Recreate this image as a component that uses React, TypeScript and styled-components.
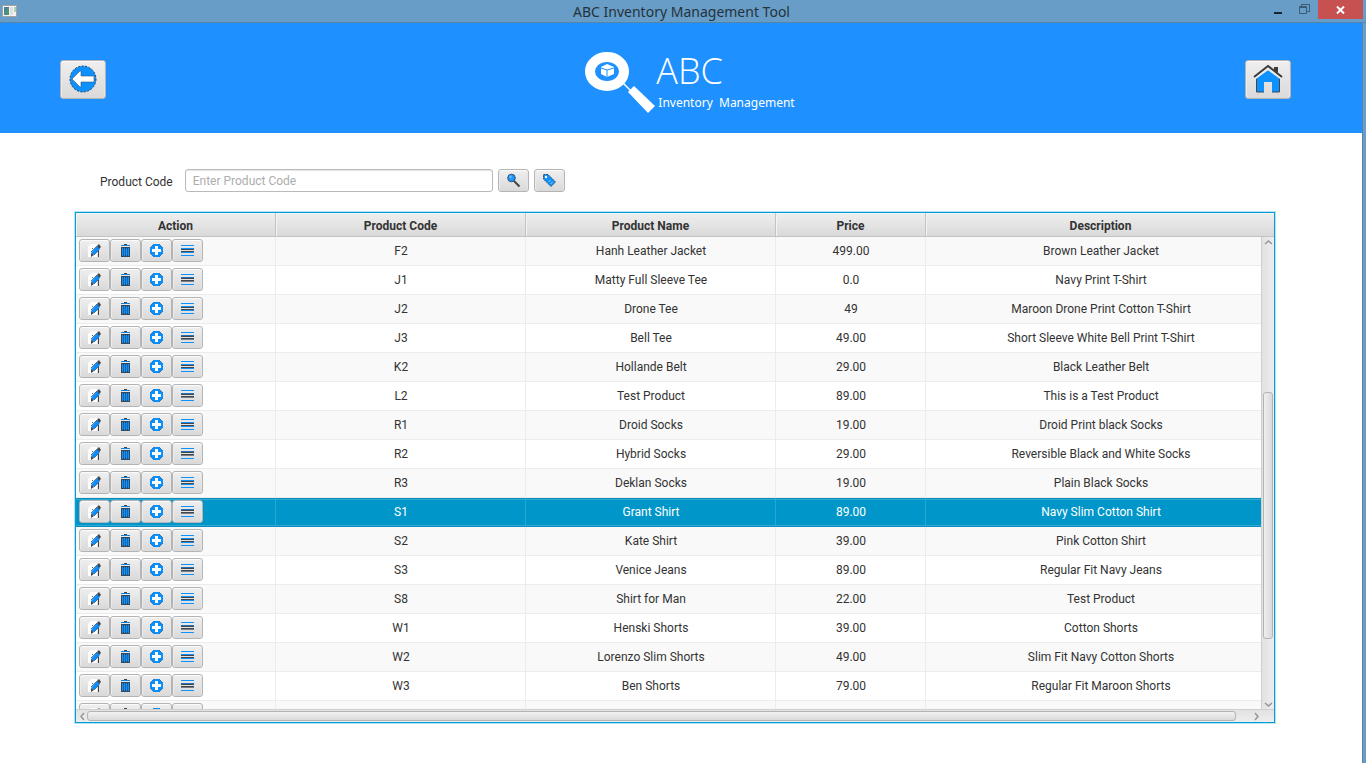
import React from "react";
import styled, { createGlobalStyle, css } from "styled-components";

const GlobalStyle = createGlobalStyle`
  *, *::before, *::after { box-sizing: border-box; }
  body { margin: 0; background: #fff; }
  button, input { font: inherit; margin: 0; }
`;

const Frame = styled.div`
  display: flex;
  flex-direction: column;
  height: 100vh;
  font: 12px/16px Roboto, "Liberation Sans", sans-serif;
  color: #333;
`;

const TitleBar = styled.header`
  display: grid;
  grid-template-columns: 1fr auto 1fr;
  height: 23px;
  flex: none;
  padding-right: 3px;
  background: #679dc6;
  border-bottom: 1px solid #5585a9;
`;

const AppMark = styled.svg`
  margin: 5px 0 0 2px;
`;

const WindowTitle = styled.h1`
  margin: 0;
  font: 400 14px/23px "Noto Sans", "Open Sans", sans-serif;
  color: #26323b;
`;

const WindowControls = styled.div`
  display: flex;
  justify-content: flex-end;
  align-items: flex-start;
`;

const ControlButton = styled.button<{ $close?: boolean }>`
  display: flex;
  align-items: center;
  justify-content: center;
  width: ${(p) => (p.$close ? "45px" : "27px")};
  height: 19px;
  padding: 0;
  border: 0;
  background: ${(p) => (p.$close ? "#c75050" : "transparent")};
`;

const ClientFrame = styled.div`
  display: flex;
  flex-direction: column;
  flex: 1;
  min-height: 0;
  padding-right: 3px;
  background: #679dc6;
`;

const Client = styled.main`
  display: flex;
  flex-direction: column;
  flex: 1;
  min-height: 0;
  border-right: 1px solid #5585a9;
  background: #fff;
`;

const Banner = styled.div`
  display: grid;
  grid-template-columns: 1fr auto 1fr;
  flex: none;
  height: 110px;
  padding: 0 71px 0 60px;
  background: #1e90ff;
`;

const raised = css`
  display: inline-flex;
  align-items: center;
  justify-content: center;
  flex: none;
  padding: 0;
  border: 1px solid #b4b4b4;
  border-radius: 3px;
  background: linear-gradient(#efefef, #d9d9d9);
  box-shadow: inset 0 1px 0 #fbfbfb, inset 1px 0 0 #ececec, inset -1px 0 0 #e6e6e6;
  svg { overflow: visible; }
`;

const BannerButton = styled.button<{ $end?: boolean }>`
  ${raised}
  width: 46px;
  height: 39px;
  margin-top: 37px;
  justify-self: ${(p) => (p.$end ? "end" : "start")};
`;

const IconButton = styled.button`
  ${raised}
  width: 31px;
  height: 23px;
`;

const Brand = styled.div`
  display: flex;
  align-items: flex-start;
  padding: 29px 0 0 29px;
`;

const BrandText = styled.div`
  display: flex;
  flex-direction: column;
  color: #fff;
  font-family: "Noto Sans", "Open Sans", sans-serif;
`;

const BrandName = styled.span`
  font-family: "Open Sans", "Noto Sans", sans-serif;
  font-size: 36px;
  font-weight: 300;
  line-height: 38px;
`;

const BrandTag = styled.span`
  padding-left: 2px;
  font-size: 12px;
  line-height: 26px;
  white-space: pre;
`;

const SearchForm = styled.form`
  display: flex;
  align-items: center;
  gap: 5px;
  flex: none;
  padding: 36px 100px 20px;
`;

const SearchLabel = styled.label`
  margin-right: 7px;
  padding-top: 2px;
`;

const SearchInput = styled.input`
  width: 308px;
  height: 23px;
  padding: 0 7px;
  border: 1px solid #bababa;
  border-radius: 3px;
  background: #fff;
  box-shadow: inset 0 1px 1px #e6e6e6;
  color: #333;
  outline: 0;
  &::placeholder { color: #adadad; opacity: 1; }
`;

const TablePanel = styled.section`
  display: grid;
  grid-template-columns: minmax(0, 1fr) 13px;
  grid-template-rows: 24px minmax(0, 1fr) 13px;
  flex: 1;
  min-height: 0;
  margin: 0 87px 40px 75px;
  border: 1px solid #039ed3;
  box-shadow: 0 0 0 1px #b6e2f3;
`;

const TableClip = styled.div`
  grid-column: 1 / 3;
  grid-row: 1 / 3;
  overflow: hidden;
`;

const ProductTable = styled.table`
  width: 100%;
  min-width: 1200px;
  table-layout: fixed;
  border-collapse: separate;
  border-spacing: 0;
  text-align: center;
`;

const Col = styled.col<{ $width?: number }>`
  width: ${(p) => (p.$width ? `${p.$width}px` : "auto")};
`;

const HeadCell = styled.th`
  height: 24px;
  padding: 2px 0 0;
  font-weight: 700;
  border-right: 1px solid #c3c3c3;
  border-bottom: 1px solid #c3c3c3;
  background: linear-gradient(#efefef, #d9d9d9);
  box-shadow: inset 1px 1px 0 #f4f4f4;
`;

const Cell = styled.td`
  height: 29px;
  padding: 0 0 0 1px;
  border-right: 1px solid #ececec;
  border-bottom: 1px solid #ececec;
`;

const ActionCell = styled(Cell)`
  padding: 2px 0 0 3px;
  vertical-align: top;
`;

const Row = styled.tr<{ $selected: boolean }>`
  background: #fff;
  &:nth-child(odd) { background: #f9f9f9; }
  ${(p) =>
    p.$selected &&
    css`
      &&, &&:nth-child(odd) { background: #0096c9; color: #fff; }
      ${Cell} {
        border-right-color: #28a7d3;
        border-bottom-color: #0b8cba;
        box-shadow: inset 0 1px 0 #0b8cba, inset 0 2px 0 #30aad6, inset 0 -1px 0 #30aad6;
      }
    `}
`;

const Actions = styled.div`
  display: flex;
`;

const Scrollbar = styled.div<{ $vertical?: boolean }>`
  display: grid;
  ${(p) =>
    p.$vertical
      ? css`
          grid-column: 2;
          grid-row: 2;
          grid-template-rows: 9px 146fr 247fr 61fr 9px;
          border-left: 1px solid #cfcfcf;
          background: linear-gradient(90deg, #e2e2e2, #ededed);
        `
      : css`
          grid-column: 1 / 3;
          grid-row: 3;
          grid-template-columns: 11px 1149fr 14fr 24px;
          border-top: 1px solid #cfcfcf;
          background: linear-gradient(#e2e2e2, #ededed);
        `}
`;

const Thumb = styled.div<{ $vertical?: boolean }>`
  border: 1px solid #b4b4b4;
  border-radius: 3px;
  ${(p) =>
    p.$vertical
      ? css`
          grid-row: 3;
          margin: 0 1px;
          background: linear-gradient(90deg, #efefef, #d9d9d9);
        `
      : css`
          margin: 1px 0;
          background: linear-gradient(#f2f2f2, #dadada);
        `}
`;

const ArrowButton = styled.button<{ $last?: boolean; $corner?: boolean }>`
  display: flex;
  align-items: center;
  justify-content: center;
  padding: ${(p) => (p.$corner ? "0 12px 0 2px" : "0")};
  border: 0;
  background: transparent;
  ${(p) => p.$last && "grid-row: 5;"}
`;

const PencilIcon = () => (
  <svg width="15" height="15" viewBox="0 0 15 15" aria-hidden="true">
    <path d="M1 4 4 1H10V14H1z" fill="#fff" />
    <path d="M4 10 10 3 13 6 7 12z" fill="#0d8dfc" />
    <path d="M5 8 10 3M7 12 12 7" stroke="#2a5f92" strokeWidth=".8" fill="none" />
    <path d="M10 3 12 1 14 4 12 6zM4 10 7 12 4 14z" fill="#40464c" />
    <path d="M11 8h1v6h-1z" fill="#444" />
    <path d="M5 5h1v1H5zM4 8h1v1H4z" fill="#666" />
  </svg>
);

const TrashIcon = () => (
  <svg width="15" height="15" viewBox="0 0 15 15" shapeRendering="crispEdges" aria-hidden="true">
    <path d="M6 1h3v1H6z" fill="#444" />
    <path d="M3 2h9v1H3z" fill="#1183df" />
    <path d="M3 4h9v10H3z" fill="#33475a" />
    <path d="M4 5h1v8H4zM6 5h1v8H6zM8 5h1v8H8zM10 5h1v8h-1z" fill="#0c91ff" />
    <path d="M5 6h1v6H5zM7 6h1v6H7zM9 6h1v6H9z" fill="#1565a8" />
  </svg>
);

const PlusIcon = () => (
  <svg width="15" height="15" viewBox="0 0 15 15" aria-hidden="true">
    <path d="M5 1h5l4 4v5l-4 4H5l-4-4V5z" fill="#0790ff" />
    <path d="M5 1 1 5M10 1 14 5M1 10 5 14M14 10 10 14" stroke="#2b669b" strokeWidth=".8" />
    <path d="M6 3h3v3h3v3H9v3H6V9H3V6h3z" fill="#fff" />
  </svg>
);

const ListIcon = ({ dark }: { dark: boolean }) => (
  <svg width="15" height="15" viewBox="0 0 15 15" shapeRendering="crispEdges" aria-hidden="true">
    <path d="M1 2h13v1H1zM1 12h13v1H1z" fill="#0d92ff" />
    <path d="M1 5h13v1H1z" fill={dark ? "#2470b4" : "#0d92ff"} />
    <path d="M1 6h13v1H1zM1 8h13v1H1z" fill="#42474d" />
    <path d="M1 9h13v1H1z" fill={dark ? "#777d84" : "#0d92ff"} />
  </svg>
);

const MagnifierIcon = () => (
  <svg width="15" height="15" viewBox="0 0 15 15" aria-hidden="true">
    <path d="M8 8 13.500 13.500" stroke="#444" strokeWidth="2" />
    <circle cx="5.500" cy="5" r="3.800" fill="#1c94ff" stroke="#33536e" />
    <circle cx="4.500" cy="4" r="1.400" fill="#62b6ff" />
  </svg>
);

const TagIcon = () => (
  <svg width="15" height="15" viewBox="0 0 15 15" aria-hidden="true">
    <path d="M1.500 1.500H6L13.500 9 9 13.500 1.500 6z" fill="#0c91ff" stroke="#344e65" strokeDasharray="2 .6" />
    <circle cx="4" cy="4" r="1.200" fill="#fff" />
    <path d="M6.500 9 9 6.500M8.500 11 11 8.500" stroke="#d1eaff" strokeDasharray="1 .7" />
  </svg>
);

const BackIcon = () => (
  <svg width="28" height="27" viewBox="0 0 28 27" aria-hidden="true">
    <circle cx="14" cy="13" r="13" fill="#0c91ff" stroke="#2b4152" strokeDasharray="2 1.500" />
    <path d="M3 13 11 5H12V10H25V16H12V21H11z" fill="#fff" stroke="#3a5770" strokeWidth=".6" />
  </svg>
);

const HomeIcon = () => (
  <svg width="28" height="27" viewBox="0 0 28 27" aria-hidden="true">
    <path d="M2 12 14 4 26 12V26H18V16H10V26H2z" fill="#0c91ff" />
    <path d="M2.500 12V26H10M25.500 12V26H18" fill="none" stroke="#3d4852" />
    <path d="M1 12.500 14 3 27 12.500" fill="none" stroke="#ececec" strokeWidth="2" />
    <path d="M20 1H24V7L20 4z" fill="#3c3c3c" />
    <path d="M0 11 14 0 28 11" fill="none" stroke="#3c3c3c" strokeWidth="2" />
  </svg>
);

const LogoMark = () => (
  <svg width="71" height="63" viewBox="0 0 71 63" aria-hidden="true">
    <ellipse cx="22" cy="19.500" rx="17" ry="14.500" fill="none" stroke="#fff" strokeWidth="10" />
    <path d="M38 31 46 39" stroke="#fff" strokeWidth="1.500" />
    <path d="M43 40 49 34 70 54 63 61z" fill="#fff" />
    <path d="M16 15 22 12 29 15V22L22 25 16 22z" fill="#fff" />
    <path d="M16 16 22 18 29 16M22 18V25" fill="none" stroke="#1e90ff" strokeWidth="1" />
  </svg>
);

const Chevron = ({ d, w, h }: { d: string; w: number; h: number }) => (
  <svg width={w} height={h} viewBox={`0 0 ${w} ${h}`} aria-hidden="true">
    <path d={d} fill="none" stroke="#969696" strokeWidth="1.500" />
  </svg>
);

const columns = [
  { title: "Action", width: 200 },
  { title: "Product Code", width: 250 },
  { title: "Product Name", width: 250 },
  { title: "Price", width: 150 },
  { title: "Description" },
];

const products = [
  ["F2", "Hanh Leather Jacket", "499.00", "Brown Leather Jacket"],
  ["J1", "Matty Full Sleeve Tee", "0.0", "Navy Print T-Shirt"],
  ["J2", "Drone Tee", "49", "Maroon Drone Print Cotton T-Shirt"],
  ["J3", "Bell Tee", "49.00", "Short Sleeve White Bell Print T-Shirt"],
  ["K2", "Hollande Belt", "29.00", "Black Leather Belt"],
  ["L2", "Test Product", "89.00", "This is a Test Product"],
  ["R1", "Droid Socks", "19.00", "Droid Print black Socks"],
  ["R2", "Hybrid Socks", "29.00", "Reversible Black and White Socks"],
  ["R3", "Deklan Socks", "19.00", "Plain Black Socks"],
  ["S1", "Grant Shirt", "89.00", "Navy Slim Cotton Shirt"],
  ["S2", "Kate Shirt", "39.00", "Pink Cotton Shirt"],
  ["S3", "Venice Jeans", "89.00", "Regular Fit Navy Jeans"],
  ["S8", "Shirt for Man", "22.00", "Test Product"],
  ["W1", "Henski Shorts", "39.00", "Cotton Shorts"],
  ["W2", "Lorenzo Slim Shorts", "49.00", "Slim Fit Navy Cotton Shorts"],
  ["W3", "Ben Shorts", "79.00", "Regular Fit Maroon Shorts"],
  ["", "", "", ""],
];

export default function App() {
  return (
    <Frame>
      <GlobalStyle />
      <TitleBar>
        <AppMark width="16" height="13" viewBox="0 0 16 13" aria-hidden="true">
          <path d="M.5.5h14v11H.5z" fill="#f3f3f3" stroke="#a3a3a3" />
          <path d="M2 2h5v8H2z" fill="#4b9479" />
          <path d="M2 2h5L2 7z" fill="#4a7fa5" />
          <path d="M8 2h3v8H8z" fill="#dedede" />
          <path d="M12 2h2v5h-2z" fill="#a7d0b4" />
        </AppMark>
        <WindowTitle>ABC Inventory Management Tool</WindowTitle>
        <WindowControls>
          <ControlButton aria-label="Minimize">
            <svg width="8" height="10" viewBox="0 0 8 10"><path d="M0 7h8v2H0z" fill="#1b252c" /></svg>
          </ControlButton>
          <ControlButton aria-label="Restore">
            <svg width="11" height="11" viewBox="0 0 11 11">
              <path d="M.5 2.500h7v7h-7zM.5 3.500h7M2.500 2V.5h8v7H8" fill="none" stroke="#3d5c74" />
            </svg>
          </ControlButton>
          <ControlButton $close aria-label="Close">
            <svg width="9" height="8" viewBox="0 0 9 8"><path d="M1 .5 8 7.500M8 .5 1 7.500" stroke="#fff" strokeWidth="2" /></svg>
          </ControlButton>
        </WindowControls>
      </TitleBar>
      <ClientFrame>
        <Client>
          <Banner>
            <BannerButton aria-label="Back"><BackIcon /></BannerButton>
            <Brand>
              <LogoMark />
              <BrandText>
                <BrandName>ABC</BrandName>
                <BrandTag>Inventory  Management</BrandTag>
              </BrandText>
            </Brand>
            <BannerButton $end aria-label="Home"><HomeIcon /></BannerButton>
          </Banner>
          <SearchForm onSubmit={(e) => e.preventDefault()}>
            <SearchLabel htmlFor="product-code">Product Code</SearchLabel>
            <SearchInput id="product-code" placeholder="Enter Product Code" />
            <IconButton type="submit" aria-label="Search"><MagnifierIcon /></IconButton>
            <IconButton type="button" aria-label="Tags"><TagIcon /></IconButton>
          </SearchForm>
          <TablePanel>
            <TableClip>
              <ProductTable>
                <colgroup>
                  {columns.map((c) => <Col key={c.title} $width={c.width} />)}
                </colgroup>
                <thead>
                  <tr>{columns.map((c) => <HeadCell key={c.title}>{c.title}</HeadCell>)}</tr>
                </thead>
                <tbody>
                  {products.map((product, i) => (
                    <Row key={i} $selected={product[0] === "S1"}>
                      <ActionCell>
                        <Actions>
                          <IconButton aria-label="Edit"><PencilIcon /></IconButton>
                          <IconButton aria-label="Delete"><TrashIcon /></IconButton>
                          <IconButton aria-label="Add"><PlusIcon /></IconButton>
                          <IconButton aria-label="Details"><ListIcon dark={i % 2 === 1} /></IconButton>
                        </Actions>
                      </ActionCell>
                      {product.map((value, j) => <Cell key={j}>{value}</Cell>)}
                    </Row>
                  ))}
                </tbody>
              </ProductTable>
            </TableClip>
            <Scrollbar $vertical>
              <ArrowButton aria-label="Scroll up"><Chevron d="M1 5 4.500 2 8 5" w={9} h={6} /></ArrowButton>
              <Thumb $vertical />
              <ArrowButton $last aria-label="Scroll down"><Chevron d="M1 1 4.500 4 8 1" w={9} h={6} /></ArrowButton>
            </Scrollbar>
            <Scrollbar>
              <ArrowButton aria-label="Scroll left"><Chevron d="M5 1 2 4.500 5 8" w={6} h={9} /></ArrowButton>
              <Thumb />
              <span />
              <ArrowButton $corner aria-label="Scroll right"><Chevron d="M1 1 4 4.500 1 8" w={6} h={9} /></ArrowButton>
            </Scrollbar>
          </TablePanel>
        </Client>
      </ClientFrame>
    </Frame>
  );
}
